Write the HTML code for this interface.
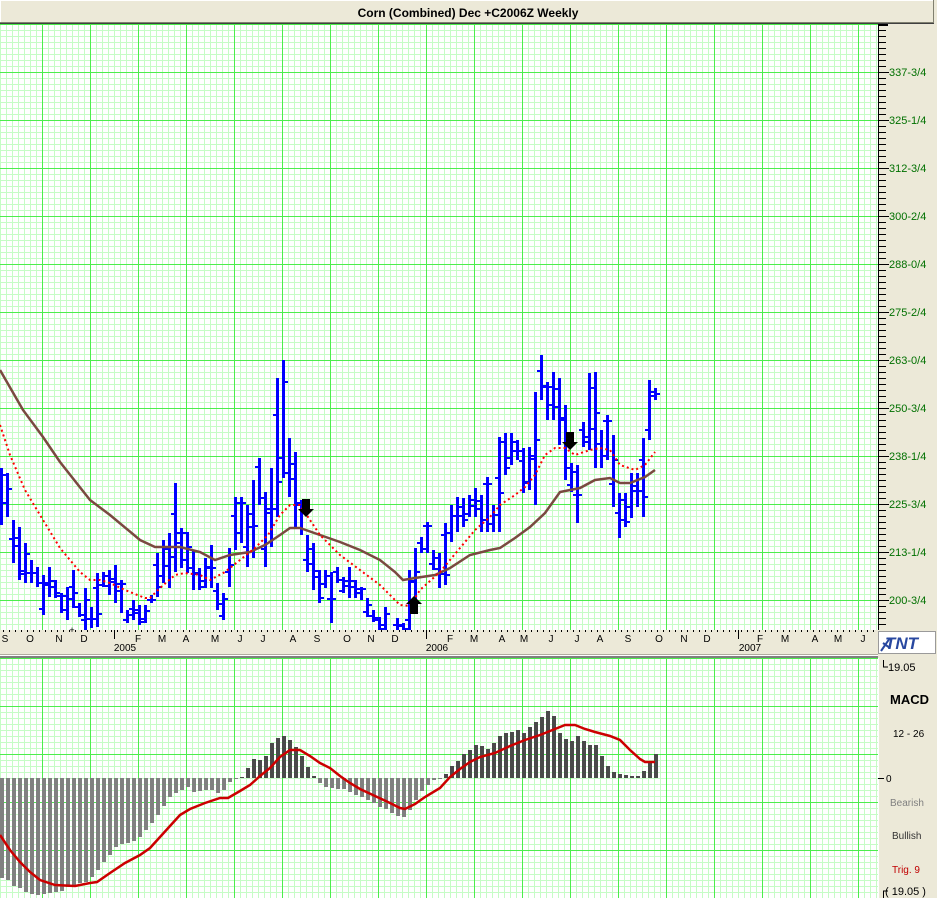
<!DOCTYPE html>
<html><head><meta charset="utf-8"><style>
html,body{margin:0;padding:0;background:#ece9d8;}
body{width:937px;height:898px;position:relative;overflow:hidden;font-family:"Liberation Sans",sans-serif;}
</style></head><body>
<svg id="s" width="937" height="898" xmlns="http://www.w3.org/2000/svg" style="position:absolute;left:0;top:0">
<defs>
<pattern id="g1" width="48" height="48" patternUnits="userSpaceOnUse" patternTransform="translate(42,24)">
<rect width="48" height="48" fill="#fff"/>
<path d="M6.5 0V48M12.5 0V48M18.5 0V48M24.5 0V48M30.5 0V48M36.5 0V48M42.5 0V48M0 6.5H48M0 12.5H48M0 18.5H48M0 24.5H48M0 30.5H48M0 36.5H48M0 42.5H48" stroke="#c6fcc6" stroke-width="1"/>
<path d="M0.5 0V48M0 0.5H48" stroke="#4ced4c" stroke-width="1"/>
</pattern>
<pattern id="g2" width="48" height="48" patternUnits="userSpaceOnUse" patternTransform="translate(42,706)">
<rect width="48" height="48" fill="#fff"/>
<path d="M6.5 0V48M12.5 0V48M18.5 0V48M24.5 0V48M30.5 0V48M36.5 0V48M42.5 0V48M0 6.5H48M0 12.5H48M0 18.5H48M0 24.5H48M0 30.5H48M0 36.5H48M0 42.5H48" stroke="#c6fcc6" stroke-width="1"/>
<path d="M0.5 0V48M0 0.5H48" stroke="#4ced4c" stroke-width="1"/>
</pattern>
</defs>
<rect x="0" y="0" width="937" height="898" fill="#ece9d8"/>
<rect x="0.5" y="0.5" width="933" height="22" fill="#ece9d8" stroke="#fff"/>
<path d="M0 22.5H934M933.5 0V23" stroke="#808070"/>
<rect x="0" y="23" width="934" height="1" fill="#404040"/>
<text x="468" y="17" text-anchor="middle" font-size="12" font-weight="bold" fill="#000">Corn (Combined) Dec +C2006Z Weekly</text>
<rect x="0" y="24" width="878" height="606" fill="url(#g1)"/>
<rect x="0" y="658" width="878" height="240" fill="url(#g2)"/>
<rect x="0" y="655" width="878" height="1" fill="#fff"/>
<rect x="0" y="656" width="878" height="2" fill="#808080"/>
<g id="dyn"></g>
</svg>
<script>
var NS="http://www.w3.org/2000/svg",g=document.getElementById('dyn');
function el(t,a,txt){var e=document.createElementNS(NS,t);for(var k in a)e.setAttribute(k,a[k]);if(txt!=null)e.textContent=txt;g.appendChild(e);return e;}
var B=[[0,468,525],[6,473,517],[12,520,563],[18,527,580],[24,543,583],[30,560,583],[36,567,587],[42,575,615],[48,567,597],[54,580,598],[60,593,613],[66,587,620],[72,570,608],[78,603,617],[84,588,630],[90,607,628],[96,573,627],[102,572,587],[108,570,595],[114,565,603],[120,580,613],[126,610,623],[132,600,620],[138,605,625],[144,605,623],[150,595,603],[156,553,597],[162,540,583],[168,533,588],[174,483,572],[180,528,568],[186,532,573],[192,550,590],[198,568,590],[204,558,588],[210,545,588],[216,583,610],[222,593,620],[228,548,587],[234,497,550],[240,497,543],[246,505,567],[252,480,558],[258,458,505],[264,492,567],[270,468,547],[276,378,517],[282,360,478],[288,438,497],[294,452,527],[300,500,535],[306,535,572],[312,543,590],[318,570,603],[324,570,588],[330,572,623],[336,567,583],[342,577,593],[348,567,598],[354,580,598],[360,587,600],[366,598,617],[372,610,622],[378,617,630],[384,607,630],[396,618,630],[402,623,630],[408,570,630],[414,548,603],[420,537,553],[426,522,553],[432,550,570],[438,553,588],[444,523,585],[450,505,542],[456,497,532],[462,498,527],[468,495,517],[474,488,517],[480,495,532],[486,477,532],[492,505,532],[498,437,532],[504,433,475],[510,433,465],[516,440,460],[522,448,493],[528,447,490],[534,392,505],[540,355,400],[546,382,420],[552,372,420],[558,378,445],[564,405,480],[570,463,492],[576,465,523],[582,422,447],[588,373,450],[594,372,468],[600,430,468],[606,415,460],[612,435,507],[618,493,538],[624,493,527],[630,473,518],[636,473,507],[642,438,517],[648,380,440],[654,388,400]];
B.forEach(function(b,i){var x=b[0],t=b[1],bt=b[2],h=bt-t;
el('rect',{x:x,y:t,width:3,height:h,fill:'#0000ff'});
var o=t+h*((i*37%10)/10*0.8+0.1),c=t+h*((i*53%10)/10*0.8+0.1);
el('rect',{x:x-3,y:Math.round(o),width:3,height:2,fill:'#0000ff'});
el('rect',{x:x+3,y:Math.round(c),width:3,height:2,fill:'#0000ff'});});
function pl(pts){return pts.map(function(p){return p[0]+','+p[1]}).join(' ');}
var MA=[[0,370],[23,410],[43,437],[60,462],[90,500],[110,515],[140,540],[155,547],[180,547],[200,552],[215,560],[230,555],[250,552],[265,545],[280,535],[290,528],[300,528],[320,535],[340,542],[360,550],[380,560],[395,572],[403,580],[415,578],[435,575],[450,568],[470,555],[490,550],[500,548],[515,538],[530,527],[545,513],[560,492],[570,490],[580,488],[595,480],[610,478],[620,483],[630,483],[645,477],[655,470]];
el('polyline',{points:pl(MA),fill:'none',stroke:'#7a4a40','stroke-width':2.5});
var RD=[[0,425],[10,455],[25,490],[40,515],[60,548],[80,572],[90,580],[100,580],[110,583],[125,590],[145,598],[150,598],[160,588],[175,575],[185,573],[200,575],[210,580],[225,572],[240,560],[255,548],[268,535],[280,515],[290,505],[300,505],[310,520],[320,535],[340,555],[360,570],[380,585],[400,605],[410,606],[420,590],[440,572],[460,548],[475,530],[490,517],[500,505],[515,495],[525,487],[535,475],[545,455],[555,448],[565,448],[575,455],[590,450],[600,448],[610,450],[620,465],[635,470],[645,465],[655,452]];
el('polyline',{points:pl(RD),fill:'none',stroke:'#ff0000','stroke-width':2,'stroke-dasharray':'2 3'});
function arrow(x,y,dn){if(dn)el('path',{d:'M'+(x-4)+' '+y+'h8v10h4l-8 8l-8-8h4z',fill:'#000'});else el('path',{d:'M'+(x-4)+' '+(y+18)+'h8v-10h4l-8-8l-8 8h4z',fill:'#000'});}
arrow(306,499,1);arrow(570,432,1);arrow(414,596,0);
el('rect',{x:0,y:630,width:878,height:25,fill:'#ece9d8'});
for(var x=3;x<878;x+=6)el('rect',{x:x,y:630,width:1,height:2,fill:'#000'});
[114,426,738].forEach(function(x){el('rect',{x:x,y:630,width:1,height:9,fill:'#000'});});
var ML=[['S',5],['O',30],['N',59],['D',84],['F',138],['M',162],['A',186],['M',215],['J',240],['J',263],['A',293],['S',317],['O',347],['N',371],['D',395],['F',450],['M',474],['A',502],['M',524],['J',551],['J',577],['A',600],['S',628],['O',659],['N',684],['D',707],['F',760],['M',785],['A',815],['M',838],['J',863]];
ML.forEach(function(m){el('text',{x:m[1],y:642,'font-size':10,'text-anchor':'middle',fill:'#000'},m[0]);});
[['2005',125],['2006',437],['2007',750]].forEach(function(m){el('text',{x:m[1],y:651,'font-size':10,'text-anchor':'middle',fill:'#000'},m[0]);});
el('rect',{x:0,y:654,width:878,height:1,fill:'#b0ad9f'});
el('rect',{x:878,y:24,width:1,height:606,fill:'#000'});
for(var y=30;y<630;y+=6)el('rect',{x:879,y:y,width:7,height:1,fill:'#000'});
el('rect',{x:878,y:24,width:10,height:2,fill:'#000'});
var PL=['337-3/4','325-1/4','312-3/4','300-2/4','288-0/4','275-2/4','263-0/4','250-3/4','238-1/4','225-3/4','213-1/4','200-3/4'];
PL.forEach(function(l,i){var y=72+48*i;el('rect',{x:879,y:y,width:10,height:1,fill:'#000'});el('text',{x:889,y:y+4,'font-size':11,fill:'#007000'},l);});
el('rect',{x:878.5,y:631.5,width:57,height:22,fill:'#fff',stroke:'#9a9a9a'});
el('text',{x:885,y:649,'font-size':17,'font-weight':'bold','font-style':'italic',fill:'#2848a0'},'TNT');
el('path',{d:'M881 651l9-13M883 643l7 5',stroke:'#2848a0','stroke-width':2,fill:'none'});
var H=[878,880,886,888,892,894,895,894,893,892,891,887,887,883,882,877,870,862,855,847,844,843,841,837,830,823,815,806,797,793,790,787,792,791,790,790,793,790,782,779,777,768,759,760,756,743,738,736,740,747,756,767,776,783,787,788,789,789,792,795,797,800,803,807,809,813,816,817,810,800,791,785,780,779,774,766,761,754,750,745,746,749,743,736,733,732,730,733,727,722,717,711,716,733,739,741,736,741,745,745,756,766,772,774,775,776,776,771,762,754];
var Z=778;
H.forEach(function(v,i){var x=i*6;if(v>=Z){el('rect',{x:x,y:Z,width:4,height:Math.max(1,v-Z),fill:'#808080'});}else{el('rect',{x:x,y:v,width:4,height:Z-v,fill:'#4a4a4a'});}});
var SG=[[0,835],[10,850],[20,862],[30,872],[40,880],[55,885],[75,886],[90,883],[97,882],[110,873],[125,863],[140,855],[150,848],[160,837],[170,826],[180,815],[190,809],[205,803],[220,798],[228,798],[240,791],[250,785],[260,776],[270,768],[280,757],[290,750],[300,750],[310,756],[320,763],[330,768],[340,776],[350,783],[360,789],[375,796],[390,803],[400,808],[405,809],[415,804],[425,797],[440,788],[450,777],[460,769],[470,762],[480,757],[495,753],[510,746],[525,740],[540,735],[555,729],[565,725],[575,725],[585,729],[595,732],[610,736],[620,740],[630,750],[640,759],[645,762],[655,762]];
el('polyline',{points:pl(SG),fill:'none',stroke:'#cc0000','stroke-width':2.5});
el('rect',{x:878,y:658,width:1,height:240,fill:'#fff'});
el('path',{d:'M883.5 660V667H888M883.5 898V891H888',stroke:'#000',fill:'none'});
el('text',{x:888,y:671,'font-size':11,fill:'#000'},'19.05');
el('text',{x:890,y:704,'font-size':13,'font-weight':'bold',fill:'#000'},'MACD');
el('text',{x:893,y:737,'font-size':10,fill:'#000'},'12 - 26');
el('rect',{x:878,y:778,width:6,height:1,fill:'#000'});
el('text',{x:886,y:782,'font-size':10,fill:'#000'},'0');
el('text',{x:890,y:806,'font-size':10,fill:'#808080'},'Bearish');
el('text',{x:892,y:839,'font-size':10,fill:'#333'},'Bullish');
el('text',{x:892,y:873,'font-size':10,fill:'#c00000'},'Trig. 9');
el('text',{x:885,y:895,'font-size':11,fill:'#000'},'( 19.05 )');
el('text',{x:72,y:633,'font-size':9,'text-anchor':'middle',fill:'#000'},'+');
</script>
</body></html>
